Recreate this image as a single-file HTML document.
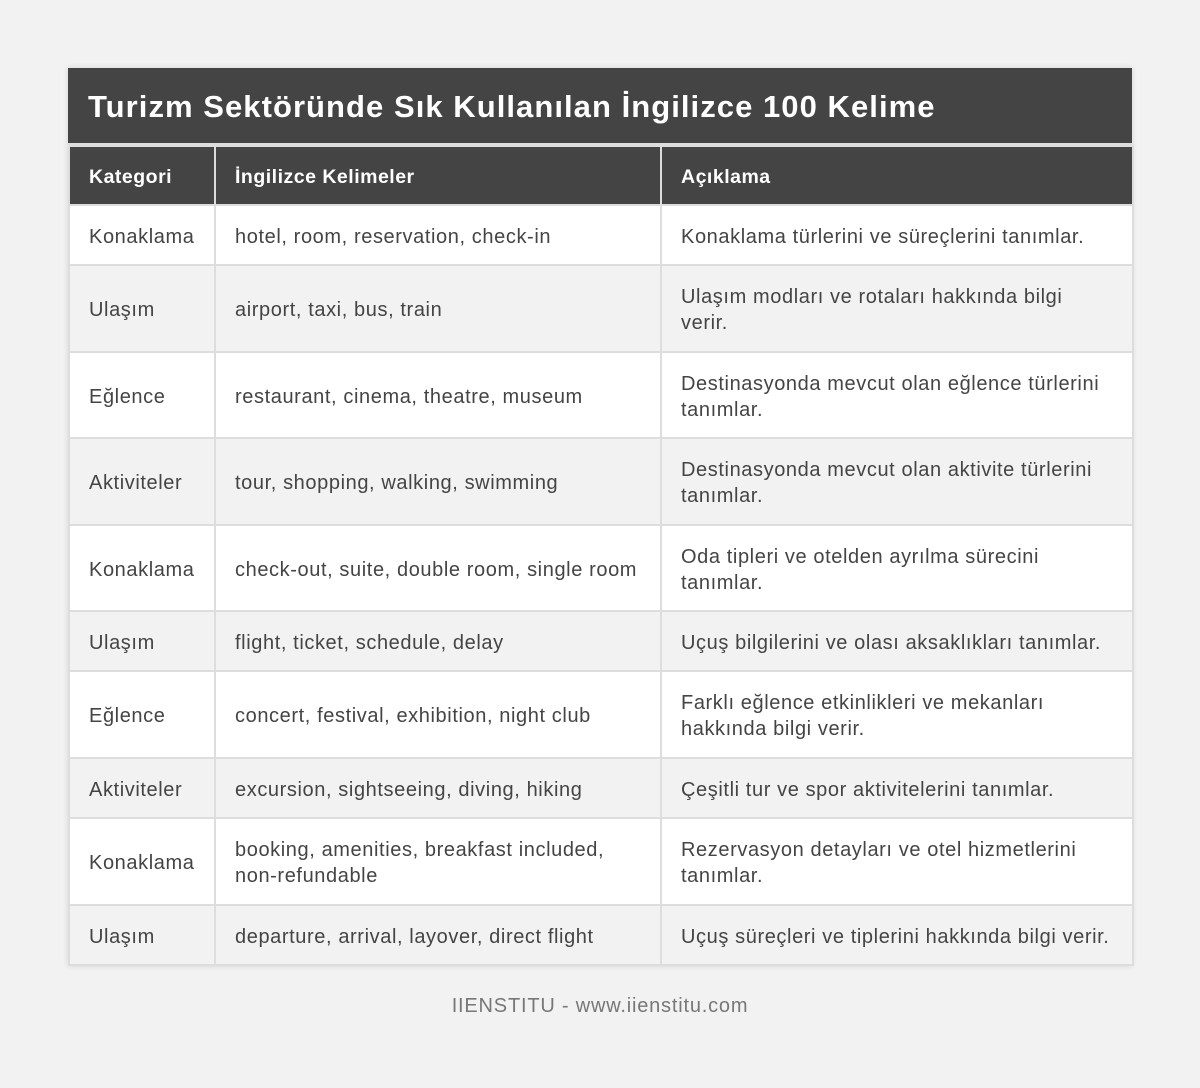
<!DOCTYPE html>
<html><head><meta charset="utf-8"><style>
html,body{margin:0;padding:0;background:#f2f2f2;}
body{width:1200px;height:1088px;position:relative;font-family:"Liberation Sans",sans-serif;}
.wrap{position:absolute;left:68px;top:68px;width:1064px;box-shadow:0 0 6px rgba(0,0,0,0.12);}
.title{background:#444;color:#fff;font-weight:bold;font-size:31px;letter-spacing:1.05px;line-height:78px;padding-left:20px;border-bottom:2px solid #ddd;box-sizing:border-box;height:77px;white-space:nowrap;}
table{border-collapse:collapse;width:1064px;table-layout:fixed;}
td,th{border:2px solid #ddd;padding:3px 14px 0 19px;font-size:20px;letter-spacing:0.6px;color:#444;text-align:left;line-height:26px;vertical-align:middle;}
th{background:#444;color:#fff;height:55px;padding-top:2px;font-weight:bold;font-size:19.5px;letter-spacing:0.5px;}
tr.a td{background:#fff}
tr.b td{background:#f2f2f2}
.nw{white-space:nowrap}
.footer{position:absolute;top:995px;left:0;width:1200px;text-align:center;color:#777;font-size:20px;letter-spacing:0.8px;}
</style></head><body>
<div class="wrap">
<div class="title">Turizm Sektöründe Sık Kullanılan İngilizce 100 Kelime</div>
<table>
<colgroup><col style="width:146px"><col style="width:446px"><col style="width:472px"></colgroup>
<tr><th>Kategori</th><th>İngilizce Kelimeler</th><th>Açıklama</th></tr>
<tr class="a" style="height:60px"><td>Konaklama</td><td>hotel, room, reservation, check-in</td><td>Konaklama türlerini ve süreçlerini tanımlar.</td></tr>
<tr class="b" style="height:87px"><td>Ulaşım</td><td>airport, taxi, bus, train</td><td>Ulaşım modları ve rotaları hakkında bilgi<br>verir.</td></tr>
<tr class="a" style="height:86px"><td>Eğlence</td><td>restaurant, cinema, theatre, museum</td><td>Destinasyonda mevcut olan eğlence türlerini<br>tanımlar.</td></tr>
<tr class="b" style="height:87px"><td>Aktiviteler</td><td>tour, shopping, walking, swimming</td><td>Destinasyonda mevcut olan aktivite türlerini<br>tanımlar.</td></tr>
<tr class="a" style="height:86px"><td>Konaklama</td><td>check-out, suite, double room, single room</td><td>Oda tipleri ve otelden ayrılma sürecini<br>tanımlar.</td></tr>
<tr class="b" style="height:60px"><td>Ulaşım</td><td>flight, ticket, schedule, delay</td><td class="nw">Uçuş bilgilerini ve olası aksaklıkları tanımlar.</td></tr>
<tr class="a" style="height:87px"><td>Eğlence</td><td>concert, festival, exhibition, night club</td><td>Farklı eğlence etkinlikleri ve mekanları<br>hakkında bilgi verir.</td></tr>
<tr class="b" style="height:60px"><td>Aktiviteler</td><td>excursion, sightseeing, diving, hiking</td><td>Çeşitli tur ve spor aktivitelerini tanımlar.</td></tr>
<tr class="a" style="height:87px"><td>Konaklama</td><td>booking, amenities, breakfast included,<br><span class="nw">non-refundable</span></td><td>Rezervasyon detayları ve otel hizmetlerini<br>tanımlar.</td></tr>
<tr class="b" style="height:60px"><td>Ulaşım</td><td>departure, arrival, layover, direct flight</td><td class="nw">Uçuş süreçleri ve tiplerini hakkında bilgi verir.</td></tr>
</table>
</div>
<div class="footer">IIENSTITU - www.iienstitu.com</div>
</body></html>
